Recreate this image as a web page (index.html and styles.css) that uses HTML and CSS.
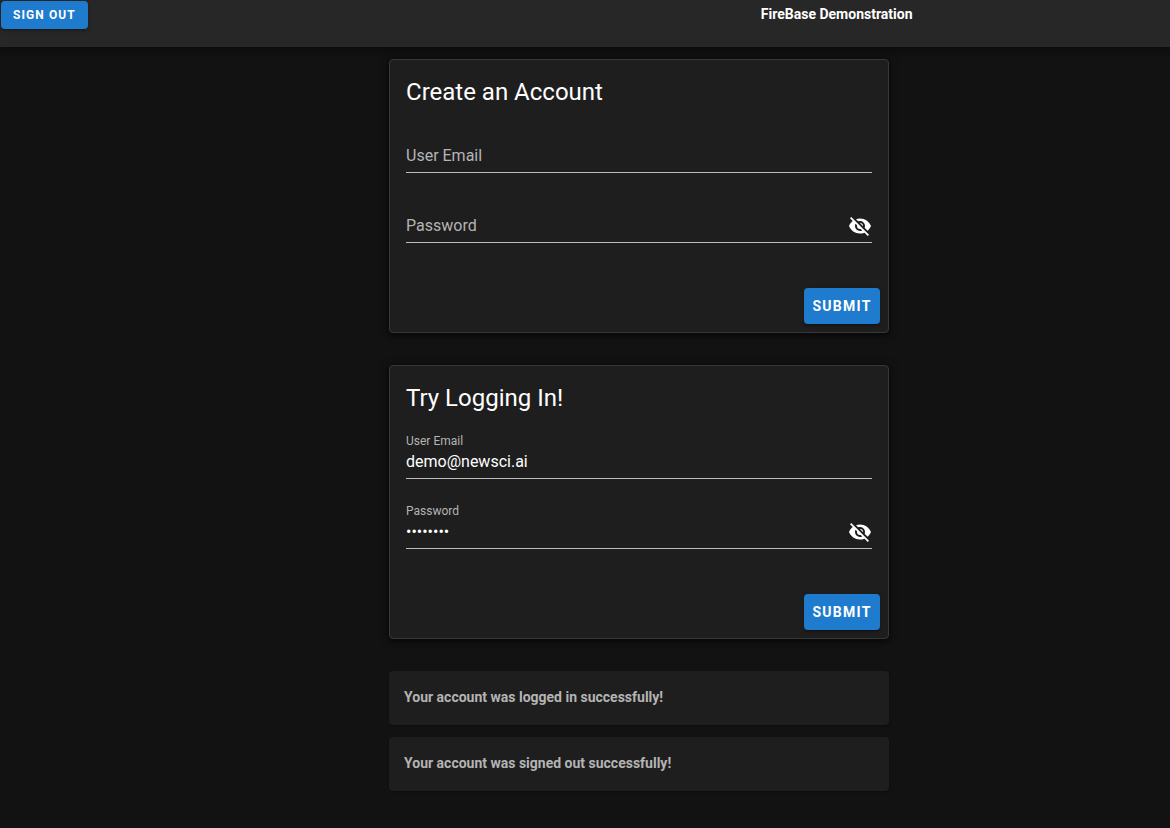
FILE: index.html
```html
<!DOCTYPE html>
<html lang="en">
<head>
  <meta charset="utf-8">
  <meta name="viewport" content="width=device-width, initial-scale=1">
  <title>FireBase Demonstration</title>
  <link rel="stylesheet" href="styles.css">
</head>
<body>
  <svg class="sprite" aria-hidden="true">
    <symbol id="eye-off" viewBox="0 0 24 24">
      <path d="M11.83,9L15,12.16C15,12.11 15,12.05 15,12A3,3 0 0,0 12,9C11.94,9 11.89,9 11.83,9M7.53,9.8L9.08,11.35C9.03,11.56 9,11.77 9,12A3,3 0 0,0 12,15C12.22,15 12.44,14.97 12.65,14.92L14.2,16.47C13.53,16.8 12.79,17 12,17A5,5 0 0,1 7,12C7,11.21 7.2,10.47 7.53,9.8M2,4.27L4.28,6.55L4.73,7C3.08,8.3 1.78,10 1,12C2.73,16.39 7,19.5 12,19.5C13.55,19.5 15.03,19.2 16.38,18.66L16.81,19.08L19.73,22L21,20.73L3.27,3M12,7A5,5 0 0,1 17,12C17,12.64 16.87,13.26 16.64,13.82L19.57,16.75C21.07,15.5 22.27,13.86 23,12C21.27,7.61 17,4.5 12,4.5C10.6,4.5 9.26,4.75 8,5.2L10.17,7.35C10.74,7.13 11.35,7 12,7Z"/>
    </symbol>
  </svg>

  <header class="toolbar">
    <button class="btn btn-small" type="button">Sign Out</button>
    <h1 class="toolbar-title">FireBase Demonstration</h1>
  </header>

  <main class="content">
    <form class="card">
      <h2 class="card-title">Create an Account</h2>
      <div class="fields">
        <div class="field">
          <input class="field-input" id="new-email" type="email" placeholder=" " autocomplete="off">
          <label class="field-label" for="new-email">User Email</label>
        </div>
        <div class="field">
          <input class="field-input" id="new-password" type="password" placeholder=" " autocomplete="off">
          <label class="field-label" for="new-password">Password</label>
          <button class="icon-btn" type="button" aria-label="Show password"><svg class="icon"><use href="#eye-off"/></svg></button>
        </div>
      </div>
      <div class="card-actions">
        <button class="btn" type="button">Submit</button>
      </div>
    </form>

    <form class="card">
      <h2 class="card-title">Try Logging In!</h2>
      <div class="fields">
        <div class="field">
          <input class="field-input" id="email" type="email" placeholder=" " value="demo@newsci.ai">
          <label class="field-label" for="email">User Email</label>
        </div>
        <div class="field">
          <input class="field-input" id="password" type="password" placeholder=" " value="demodemo">
          <label class="field-label" for="password">Password</label>
          <button class="icon-btn" type="button" aria-label="Show password"><svg class="icon"><use href="#eye-off"/></svg></button>
        </div>
      </div>
      <div class="card-actions">
        <button class="btn" type="button">Submit</button>
      </div>
    </form>

    <div class="messages">
      <p class="message">Your account was logged in successfully!</p>
      <p class="message">Your account was signed out successfully!</p>
    </div>
  </main>
</body>
</html>
```
FILE: styles.css
```css
* {
  box-sizing: border-box;
}

body {
  margin: 0;
  min-height: 100vh;
  background: #121212;
  color: #fff;
  font-family: Roboto, "Liberation Sans", sans-serif;
  font-size: 16px;
  line-height: 24px;
}

.sprite {
  display: none;
}

.toolbar {
  display: grid;
  grid-template-columns: 65% 1fr;
  align-items: start;
  justify-items: start;
  padding: 1px 0 18px 1px;
  background: #272727;
  box-shadow: 0 2px 4px -1px rgba(0, 0, 0, 0.2), 0 4px 5px rgba(0, 0, 0, 0.14), 0 1px 10px rgba(0, 0, 0, 0.12);
}

.toolbar-title {
  margin: 0;
  font-size: 14px;
  font-weight: 700;
  line-height: 26px;
}

.btn {
  height: 36px;
  min-width: 76px;
  padding: 0 8px;
  border: 0;
  border-radius: 4px;
  background: #1f7bce;
  color: #fff;
  font-family: inherit;
  font-size: 14px;
  font-weight: 700;
  letter-spacing: 0.09em;
  text-transform: uppercase;
  box-shadow: 0 3px 1px -2px rgba(0, 0, 0, 0.2), 0 2px 2px rgba(0, 0, 0, 0.14), 0 1px 5px rgba(0, 0, 0, 0.12);
}

.btn-small {
  height: 28px;
  padding: 0 12px;
  font-size: 12px;
}

.content {
  display: flex;
  flex-direction: column;
  gap: 32px;
  width: 100%;
  max-width: 500px;
  margin: 12px 0 37px 33.25%;
}

.card {
  border: 1px solid #383838;
  border-radius: 4px;
  background: #1e1e1e;
  box-shadow: 0 3px 3px -2px rgba(0, 0, 0, 0.2), 0 3px 4px rgba(0, 0, 0, 0.14), 0 1px 8px rgba(0, 0, 0, 0.5);
}

.card-title {
  margin: 0;
  padding: 16px;
  font-size: 24px;
  font-weight: 400;
  line-height: 32px;
}

.fields {
  display: flex;
  flex-direction: column;
  gap: 38px;
  padding: 17px 16px 37px;
}

.field {
  position: relative;
  display: flex;
  align-items: flex-start;
  height: 32px;
  border-bottom: 1px solid #bcbcbc;
}

.field-input {
  flex: 1;
  min-width: 0;
  height: 31px;
  padding: 0 0 3px;
  border: 0;
  outline: 0;
  background: transparent;
  color: #fff;
  font-family: inherit;
  font-size: 16px;
}

.field-label {
  position: absolute;
  top: -14px;
  left: 0;
  color: #b4b4b4;
  font-size: 12px;
  line-height: 16px;
}

.field-input:placeholder-shown + .field-label {
  top: 5px;
  font-size: 16px;
  line-height: 20px;
}

.icon-btn {
  display: flex;
  padding: 3px 0 0;
  border: 0;
  background: transparent;
  color: #fff;
}

.icon {
  width: 24px;
  height: 24px;
  fill: currentColor;
}

.card-actions {
  display: flex;
  justify-content: flex-end;
  padding: 8px;
}

.messages {
  display: flex;
  flex-direction: column;
  gap: 12px;
}

.message {
  margin: 0;
  padding: 15px 15px 17px;
  border-radius: 4px;
  background: #1e1e1e;
  color: #b4b4b4;
  font-size: 14px;
  font-weight: 700;
  line-height: 22px;
  box-shadow: 0 1px 2px rgba(0, 0, 0, 0.3);
}
```
